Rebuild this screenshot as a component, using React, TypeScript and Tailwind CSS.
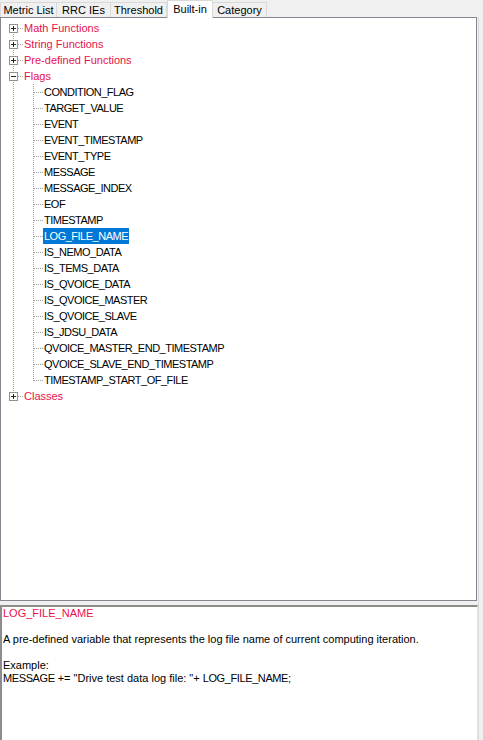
import React from 'react';

type Vert = 'full' | 'top' | 'bottom' | 'none';

const LINE = '#a0a0a0';
const RED = 'text-[#e8114b]';

const tabs = [
  { label: 'Metric List', w: 'w-[57px]' },
  { label: 'RRC IEs', w: 'w-[54px]' },
  { label: 'Threshold', w: 'w-[56px]' },
  { label: 'Built-in', w: 'w-[46px]', active: true },
  { label: 'Category', w: 'w-[54px]' },
];

const flags = [
  'CONDITION_FLAG',
  'TARGET_VALUE',
  'EVENT',
  'EVENT_TIMESTAMP',
  'EVENT_TYPE',
  'MESSAGE',
  'MESSAGE_INDEX',
  'EOF',
  'TIMESTAMP',
  'LOG_FILE_NAME',
  'IS_NEMO_DATA',
  'IS_TEMS_DATA',
  'IS_QVOICE_DATA',
  'IS_QVOICE_MASTER',
  'IS_QVOICE_SLAVE',
  'IS_JDSU_DATA',
  'QVOICE_MASTER_END_TIMESTAMP',
  'QVOICE_SLAVE_END_TIMESTAMP',
  'TIMESTAMP_START_OF_FILE',
];

// one 20x16 indent cell of the tree, with its dotted connector lines
const Cell: React.FC<{ vert: Vert; horiz?: boolean; box?: 'plus' | 'minus' }> = ({ vert, horiz, box }) => {
  const y1 = vert === 'bottom' ? 8 : 0;
  const y2 = vert === 'top' ? 9 : 16;
  return (
    <svg width={20} height={16} className="shrink-0" shapeRendering="crispEdges">
      {vert !== 'none' && (
        <line x1={10.5} x2={10.5} y1={y1} y2={y2} stroke={LINE} strokeDasharray="1 1" />
      )}
      {horiz && <line x1={11} x2={20} y1={8.5} y2={8.5} stroke={LINE} strokeDasharray="1 1" />}
      {box && (
        <>
          <rect x={6.5} y={4.5} width={8} height={8} fill="#ffffff" stroke="#919191" />
          <line x1={8} x2={13} y1={8.5} y2={8.5} stroke="#2a2a2a" />
          {box === 'plus' && <line x1={10.5} x2={10.5} y1={6} y2={11} stroke="#2a2a2a" />}
        </>
      )}
    </svg>
  );
};

const RootRow: React.FC<{ label: string; vert: Vert; open?: boolean }> = ({ label, vert, open }) => (
  <div className="flex h-4 items-center">
    <Cell vert={vert} horiz box={open ? 'minus' : 'plus'} />
    <span className={`px-px leading-4 ${RED}`}>{label}</span>
  </div>
);

const App: React.FC = () => {
  return (
    <div className="flex h-[740px] w-[483px] overflow-hidden bg-[#f0f0f0] font-['Liberation_Sans',Arial,sans-serif] text-[11px] text-black">
      <div className="flex w-[478px] flex-col">
        {/* tab strip */}
        <div className="flex h-[17px] items-end">
          {tabs.map((t) =>
            t.active ? (
              <div
                key={t.label}
                className={`${t.w} relative z-10 -mb-px flex h-[18px] items-start justify-center border border-b-0 border-[#d9d9d9] bg-white`}
              >
                {t.label}
              </div>
            ) : (
              <div
                key={t.label}
                className={`${t.w} flex h-[15px] items-center justify-center border border-b-0 border-l-0 border-[#d9d9d9] bg-[#f0f0f0] pt-px first:border-l`}
              >
                {t.label}
              </div>
            )
          )}
        </div>

        {/* tree */}
        <div className="h-[584px] w-[477px] shrink-0 border border-[#828790] bg-white pl-[2px] pt-[2px]">
          <RootRow label="Math Functions" vert="bottom" />
          <RootRow label="String Functions" vert="full" />
          <RootRow label="Pre-defined Functions" vert="full" />
          <RootRow label="Flags" vert="full" open />
          {flags.map((f, i) => {
            const last = i === flags.length - 1;
            const sel = f === 'LOG_FILE_NAME';
            return (
              <div key={f} className="flex h-4 items-center">
                <Cell vert="full" />
                <Cell vert={last ? 'top' : 'full'} horiz />
                <span className={`px-px leading-4 tracking-[-0.5px] ${sel ? 'bg-[#0078d7] text-white' : ''}`}>{f}</span>
              </div>
            );
          })}
          <RootRow label="Classes" vert="top" />
        </div>

        {/* description */}
        <div className="mt-[4px] flex-1 border-l-2 border-t-2 border-r border-l-[#8c8c8c] border-t-[#8c8c8c] border-r-[#e3e3e3] bg-white px-[1px] leading-[13px]">
          <div className={RED}>LOG_FILE_NAME</div>
          <div className="h-[13px]" />
          <div>A pre-defined variable that represents the log file name of current computing iteration.</div>
          <div className="h-[13px]" />
          <div>Example:</div>
          <div className="whitespace-pre">
            <span className="tracking-[-0.4px]">MESSAGE</span> += "Drive test data log file: "+ <span className="tracking-[-0.4px]">LOG_FILE_NAME</span>;
          </div>
        </div>
      </div>
      <div className="mt-[17px] w-[5px] border-l border-[#dadada] bg-[#f0f0f0]" />
    </div>
  );
};

export default App;
